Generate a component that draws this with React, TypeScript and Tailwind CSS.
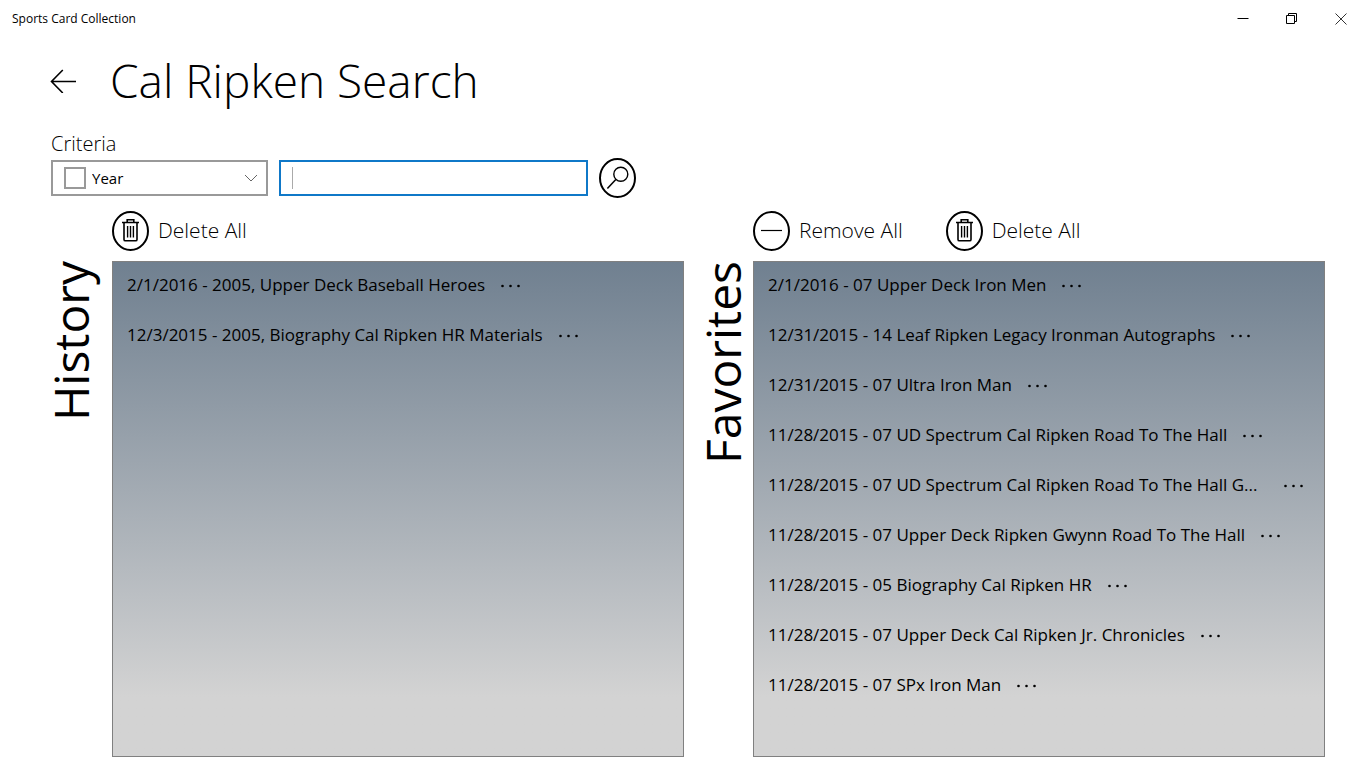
import { useState } from 'react'
import { clsx } from 'clsx'

interface CardItem {
  date: string
  title: string
  clipped?: boolean
}

const history: CardItem[] = [
  { date: '2/1/2016', title: '2005, Upper Deck Baseball Heroes' },
  { date: '12/3/2015', title: '2005, Biography Cal Ripken HR Materials' },
]

const favorites: CardItem[] = [
  { date: '2/1/2016', title: '07 Upper Deck Iron Men' },
  { date: '12/31/2015', title: '14 Leaf Ripken Legacy Ironman Autographs' },
  { date: '12/31/2015', title: '07 Ultra Iron Man' },
  { date: '11/28/2015', title: '07 UD Spectrum Cal Ripken Road To The Hall' },
  { date: '11/28/2015', title: '07 UD Spectrum Cal Ripken Road To The Hall G...', clipped: true },
  { date: '11/28/2015', title: '07 Upper Deck Ripken Gwynn Road To The Hall' },
  { date: '11/28/2015', title: '05 Biography Cal Ripken HR' },
  { date: '11/28/2015', title: '07 Upper Deck Cal Ripken Jr. Chronicles' },
  { date: '11/28/2015', title: '07 SPx Iron Man' },
]

function CircleIcon({ children }: { children: React.ReactNode }) {
  return (
    <svg width="38" height="40" viewBox="0 0 38 40" fill="none" stroke="black" className="shrink-0">
      <ellipse cx="18.5" cy="20" rx="17.5" ry="18.9" strokeWidth="2" />
      {children}
    </svg>
  )
}

function TrashIcon() {
  return (
    <CircleIcon>
      <path d="M10 11.5h17M15.2 11.2v-2.4h6.6v2.4" strokeWidth="1.6" />
      <path d="M12 11.8v16.6q0 1.4 1.4 1.4h10.2q1.4 0 1.4-1.4V11.8" strokeWidth="1.6" />
      <path d="M15.6 15v11.4M18.5 15v11.4M21.4 15v11.4" strokeWidth="1.4" />
    </CircleIcon>
  )
}

function RemoveIcon() {
  return (
    <CircleIcon>
      <path d="M8 19.5h21" strokeWidth="1.2" />
    </CircleIcon>
  )
}

function SearchIcon() {
  return (
    <CircleIcon>
      <circle cx="21.8" cy="16.2" r="7" strokeWidth="1.4" />
      <path d="M16.8 21.4 8.4 30.4" strokeWidth="1.5" />
    </CircleIcon>
  )
}

function ActionButton({ icon, label }: { icon: React.ReactNode; label: string }) {
  return (
    <button type="button" className="flex items-center gap-2 text-[21px] font-light">
      {icon}
      {label}
    </button>
  )
}

interface CardPanelProps {
  heading: string
  items: CardItem[]
  actions: React.ReactNode
  headingClassName?: string
}

function CardPanel({ heading, items, actions, headingClassName }: CardPanelProps) {
  return (
    <section className="grid min-w-0 grid-cols-[61px_minmax(0,1fr)] grid-rows-[50px_1fr]">
      <div className="col-start-2 flex items-start gap-[43px]">{actions}</div>
      <h2
        className={clsx(
          'row-start-2 rotate-180 self-start text-[48px] leading-10 [writing-mode:vertical-rl]',
          headingClassName
        )}
      >
        {heading}
      </h2>
      <ul className="row-start-2 border border-[#808080] bg-linear-to-b from-[#708090] to-[#d3d3d3] to-88% pl-[14px]">
        {items.map((item) => (
          <li key={`${item.date} ${item.title}`} className="flex h-[50px] items-start gap-[11px] pt-[7px]">
            <span className={clsx('max-w-[500px] truncate text-[17px] leading-8', item.clipped && 'min-w-[500px]')}>
              {item.date} - {item.title}
            </span>
            <button type="button" aria-label="More" className="flex h-[34px] items-center p-1">
              <svg width="22" height="4" viewBox="0 0 22 4" fill="black">
                <circle cx="2.5" cy="2" r="1.3" />
                <circle cx="10.5" cy="2" r="1.3" />
                <circle cx="18.5" cy="2" r="1.3" />
              </svg>
            </button>
          </li>
        ))}
      </ul>
    </section>
  )
}

export default function App() {
  const [query, setQuery] = useState('')
  const [useYear, setUseYear] = useState(false)

  return (
    <div className="flex min-h-screen flex-col bg-white font-['Segoe_UI','Open_Sans',sans-serif] text-black">
      {/* Title bar */}
      <div className="flex h-[37px] items-center justify-between pr-px pl-3">
        <span className="text-xs">Sports Card Collection</span>
        <div className="flex">
          <button type="button" aria-label="Minimize" className="flex w-[49px] justify-center">
            <svg width="12" height="12" viewBox="0 0 12 12" fill="none" stroke="black">
              <path d="M.5 5.5h11" />
            </svg>
          </button>
          <button type="button" aria-label="Restore" className="flex w-[49px] justify-center">
            <svg width="12" height="12" viewBox="0 0 12 12" fill="none" stroke="black">
              <path d="M.5 2.5h8v8h-8z" />
              <path d="M2.5 2.5v-2h8v8h-2" />
            </svg>
          </button>
          <button type="button" aria-label="Close" className="flex w-[49px] justify-center">
            <svg width="12" height="12" viewBox="0 0 12 12" fill="none" stroke="#333">
              <path d="M.5.5l11 11M11.5.5l-11 11" />
            </svg>
          </button>
        </div>
      </div>

      <header className="flex h-[85px] items-center gap-[34px] pl-[50px]">
        <button type="button" aria-label="Back">
          <svg width="26" height="26" viewBox="0 0 26 26" fill="none" stroke="black" strokeWidth="1.6">
            <path d="M1.5 14.5H26M12.8 3 1.5 14.5 12.8 26" />
          </svg>
        </button>
        <h1 className="text-[46px] leading-none font-light">Cal Ripken Search</h1>
      </header>

      <main className="flex grow flex-col pr-[41px] pb-[11px] pl-[51px]">
        <label htmlFor="criteria" className="mt-2 text-xl leading-7 font-light">
          Criteria
        </label>
        <div className="flex items-center gap-[11px]">
          <div className="relative flex h-9 w-[217px] items-center gap-1.5 border-2 border-[#999] pl-[11px]">
            <input
              type="checkbox"
              aria-label="Include year"
              checked={useYear}
              onChange={(e) => setUseYear(e.target.checked)}
              className="size-[22px] shrink-0 appearance-none border-2 border-[#999] checked:bg-[#0078d7]"
            />
            <select id="criteria" className="h-full grow appearance-none bg-transparent text-[15px] outline-none">
              <option>Year</option>
            </select>
            <svg
              width="14"
              height="8"
              viewBox="0 0 14 8"
              fill="none"
              stroke="#666"
              className="pointer-events-none absolute top-3 right-2"
            >
              <path d="M1 1l6 6 6-6" />
            </svg>
          </div>
          <div className="flex h-9 w-[309px] items-center border-2 border-[#0f78c8] pl-[11px]">
            {/* Text cursor */}
            {!query && <span className="h-[22px] w-px bg-[#aaa]" />}
            <input
              type="text"
              aria-label="Search text"
              value={query}
              onChange={(e) => setQuery(e.target.value)}
              className="h-full min-w-0 grow text-[15px] outline-none"
            />
          </div>
          <button type="submit" aria-label="Search">
            <SearchIcon />
          </button>
        </div>

        <div className="mt-[13px] grid grow grid-cols-2 gap-2">
          <CardPanel
            heading="History"
            items={history}
            headingClassName="justify-self-start"
            actions={<ActionButton icon={<TrashIcon />} label="Delete All" />}
          />
          <CardPanel
            heading="Favorites"
            items={favorites}
            headingClassName="justify-self-center"
            actions={
              <>
                <ActionButton icon={<RemoveIcon />} label="Remove All" />
                <ActionButton icon={<TrashIcon />} label="Delete All" />
              </>
            }
          />
        </div>
      </main>
    </div>
  )
}
